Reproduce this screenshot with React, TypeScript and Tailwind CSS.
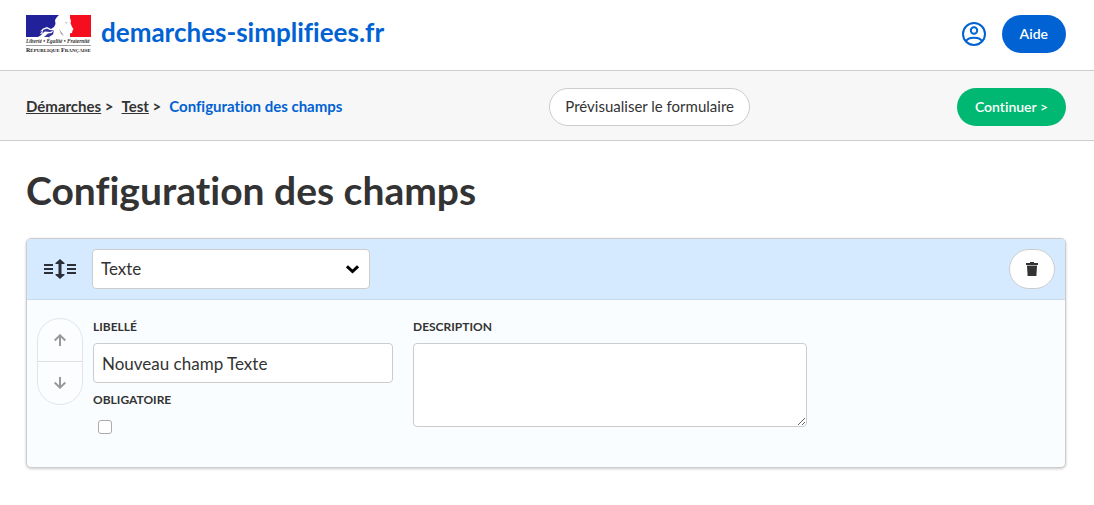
import React from 'react';

function FrenchRepublicLogo() {
  return (
    <svg width="66" height="40" viewBox="0 0 66 40" role="img" aria-label="République Française">
      <rect x="0" y="0" width="33" height="22" fill="#21219a" />
      <rect x="44" y="0" width="21" height="22" fill="#f50f1e" />
      <path
        d="M33 0H43L44 3L45 6L44.5 8L46 12L47.5 14L46.5 15.5L46 18L42 18.5L41 22H12L16 19.5L14 18.5L17 16L14 16.5L17 13.5L21 12L25 14L28 12L29.5 9L29 5L31 2Z"
        fill="#fff"
      />
      <path d="M17 15L21 13.5L24 15L28 15.5L25.5 18L22 18.5L18 22H23L27 19.5L28 15.5L24 17L19 16.5L14 20L17 17Z" fill="#34349a" />
      <path d="M39 7.2L42 7.8L40 8.6ZM33 14L36 18L38 21L35 19Z" fill="#999" />
      <text x="0" y="28" fontSize="5.4" fontStyle="italic" fill="#333" className="font-['Liberation_Serif',serif]">
        Liberté • Égalité • Fraternité
      </text>
      <path d="M0 30.5H65" stroke="#777" strokeWidth="0.7" />
      <text x="0" y="37" fontWeight="700" fill="#222" fontSize="5" className="font-['Liberation_Serif',serif]">
        <tspan fontSize="6">R</tspan>ÉPUBLIQUE <tspan fontSize="6">F</tspan>RANÇAISE
      </text>
    </svg>
  );
}

function AccountIcon() {
  return (
    <svg width="24" height="24" viewBox="0 0 24 24" fill="none" stroke="#0062d3" strokeWidth="2" aria-hidden="true">
      <circle cx="12" cy="12" r="11" />
      <circle cx="12" cy="8.5" r="3.2" />
      <path d="M4 19.5C5 16.8 8 15.7 12 15.7S19 16.8 20 19.5" />
    </svg>
  );
}

function HandleIcon() {
  return (
    <svg width="32" height="20" viewBox="0 0 32 20" fill="#2b2f38" aria-hidden="true">
      <path d="M0 5h9v2H0zM0 9h9v2H0zM0 13h9v2H0zM23 5h9v2h-9zM23 9h9v2h-9zM23 13h9v2h-9z" />
      <path d="M16 0L20.5 4V5H17.5V15H20.5V16L16 20L11.5 16V15H14.5V5H11.5V4Z" />
    </svg>
  );
}

function TrashIcon() {
  return (
    <svg width="12" height="14" viewBox="0 0 12 14" fill="#333" aria-hidden="true">
      <path d="M0 1H4V0H8V1H12V3H0Z" />
      <path d="M1 4H11L10.4 14H1.6Z" />
      <path d="M1 3H11V4H1Z" fill="#aaa" />
    </svg>
  );
}

function ArrowIcon({ down = false }: { down?: boolean }) {
  return (
    <svg width="12" height="12" viewBox="0 0 12 12" fill="none" stroke="#999" strokeWidth="2" aria-hidden="true">
      <path d={down ? 'M6 0V11M0.7 5.5L6 10.7L11.3 5.5' : 'M6 12V1M0.7 6.5L6 1.3L11.3 6.5'} />
    </svg>
  );
}

export default function App() {
  return (
    <div className="min-h-screen bg-white font-[Lato,sans-serif] text-[#333] [font-variant-ligatures:no-common-ligatures]">
      <header className="flex h-[71px] items-center justify-between border-b border-[#ccc] pr-7 pl-[26px]">
        <a href="#" className="flex items-center gap-[9px] text-[26px] leading-8 font-bold text-[#0062d3]">
          <FrenchRepublicLogo />
          <span className="pb-1.5">demarches-simplifiees.fr</span>
        </a>
        <div className="flex items-center gap-4 pb-0.5">
          <button type="button" aria-label="Mon compte">
            <AccountIcon />
          </button>
          <a href="#" className="flex h-[38px] items-center rounded-full bg-[#0062d3] px-[18px] text-sm font-semibold text-white">
            Aide
          </a>
        </div>
      </header>

      <div className="flex h-[70px] items-center justify-between border-b border-[#ccc] bg-[#f7f7f7] pt-0.5 pr-7 pl-[26px]">
        <nav aria-label="Fil d’Ariane">
          <ol className="flex text-[15px] font-bold">
            <li className="mr-2">
              <a href="#" className="underline">Démarches</a> &gt;
            </li>
            <li className="mr-2">
              <a href="#" className="underline">Test</a> &gt;
            </li>
            <li className="text-[#0062d3]" aria-current="page">Configuration des champs</li>
          </ol>
        </nav>
        <button type="button" className="h-[38px] rounded-full border border-[#ccc] bg-white px-[15px] text-[15px]">
          Prévisualiser le formulaire
        </button>
        <button type="button" className="h-[38px] rounded-full bg-[#00b871] px-[18px] text-sm font-semibold text-white">
          Continuer &gt;
        </button>
      </div>

      <main className="pt-[25px] pr-7 pb-9 pl-[26px]">
        <h1 className="mb-6 text-[39px] leading-[48px] font-bold">Configuration des champs</h1>
        <form className="overflow-hidden rounded-[5px] border border-[#ccc] bg-[#fafdff] shadow-[0_1px_3px_rgba(0,0,0,0.2)]">
          <div className="flex items-center border-b border-[#c9dcec] bg-[#d6eaff] py-2.5 pr-2.5 pl-[17px]">
            <HandleIcon />
            <div className="ml-4 grid w-[278px] items-center">
              <select
                aria-label="Type de champ"
                className="col-start-1 row-start-1 h-10 appearance-none rounded-sm border border-[#ccc] bg-white px-2 text-[17px]"
              >
                <option>Texte</option>
              </select>
              <svg
                className="pointer-events-none col-start-1 row-start-1 mr-[11px] justify-self-end"
                width="13"
                height="9"
                viewBox="0 0 13 9"
                fill="none"
                stroke="#000"
                strokeWidth="3"
                aria-hidden="true"
              >
                <path d="M1 1.3L6.5 6.5L12 1.3" />
              </svg>
            </div>
            <button
              type="button"
              aria-label="Supprimer"
              className="ml-auto flex h-10 w-[46px] items-center justify-center rounded-full border border-[#ccc] bg-white"
            >
              <TrashIcon />
            </button>
          </div>

          <div className="flex items-start px-2.5 pt-[18px] pb-[33px]">
            <div className="flex w-[46px] flex-col overflow-hidden rounded-full border border-[#e2e4e6] bg-[#fcfdff]">
              <button type="button" disabled aria-label="Monter" className="flex h-[43px] items-center justify-center border-b border-[#dcdee0]">
                <ArrowIcon />
              </button>
              <button type="button" disabled aria-label="Descendre" className="flex h-[42px] items-center justify-center">
                <ArrowIcon down />
              </button>
            </div>
            <div className="ml-2.5 flex w-[300px] flex-col">
              <label htmlFor="libelle" className="mb-[7px] text-xs leading-[18px] font-bold">LIBELLÉ</label>
              <input
                id="libelle"
                type="text"
                defaultValue="Nouveau champ Texte"
                className="h-10 rounded-sm border border-[#ccc] bg-white px-2 text-[17px]"
              />
              <label htmlFor="obligatoire" className="mt-2 mb-[11px] text-xs leading-[18px] font-bold">OBLIGATOIRE</label>
              <input
                id="obligatoire"
                type="checkbox"
                className="ml-[5px] size-3.5 appearance-none rounded-[3px] border border-[#aaa] bg-white checked:bg-[#0062d3]"
              />
            </div>
            <div className="ml-5 flex w-[394px] flex-col">
              <label htmlFor="description" className="mb-[7px] text-xs leading-[18px] font-bold">DESCRIPTION</label>
              <textarea id="description" className="h-[84px] rounded-sm border border-[#ccc] bg-white p-2 text-[17px]" />
            </div>
          </div>
        </form>
      </main>
    </div>
  );
}
